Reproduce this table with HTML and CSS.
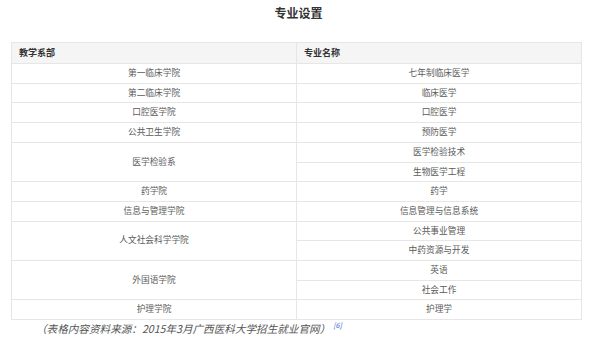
FILE: index.html
```html
<!DOCTYPE html>
<html lang="zh">
<head>
<meta charset="utf-8">
<link rel="stylesheet" href="styles.css">
</head>
<body>
<div class="page">
  <div class="title">专业设置</div>
  <table class="majors">
    <thead>
      <tr><th class="col-l">教学系部</th><th class="col-r">专业名称</th></tr>
    </thead>
    <tbody>
      <tr><td>第一临床学院</td><td>七年制临床医学</td></tr>
      <tr><td>第二临床学院</td><td>临床医学</td></tr>
      <tr><td>口腔医学院</td><td>口腔医学</td></tr>
      <tr><td>公共卫生学院</td><td>预防医学</td></tr>
      <tr><td rowspan="2">医学检验系</td><td>医学检验技术</td></tr>
      <tr><td>生物医学工程</td></tr>
      <tr><td>药学院</td><td>药学</td></tr>
      <tr><td>信息与管理学院</td><td>信息管理与信息系统</td></tr>
      <tr><td rowspan="2">人文社会科学学院</td><td>公共事业管理</td></tr>
      <tr><td>中药资源与开发</td></tr>
      <tr><td rowspan="2">外国语学院</td><td>英语</td></tr>
      <tr><td>社会工作</td></tr>
      <tr><td>护理学院</td><td>护理学</td></tr>
    </tbody>
  </table>
  <div class="caption">（表格内容资料来源：2015年3月广西医科大学招生就业官网）<sup class="ref">[6]</sup></div>
</div>
</body>
</html>
```

FILE: styles.css
```css
html, body {
  margin: 0;
  padding: 0;
  background: #ffffff;
}
body {
  font-family: "Noto Sans CJK SC", "Liberation Sans", sans-serif;
  color: #555555;
}
.page {
  padding: 6px 0 0 11px;
  width: 571px;
}
.title {
  text-align: center;
  font-size: 12px;
  line-height: 14px;
  font-weight: bold;
  color: #333333;
  padding-left: 4px;
}
.majors {
  margin-top: 22px;
  width: 571px;
  border-collapse: collapse;
  font-size: 8.7px;
}
.majors th,
.majors td {
  border: 1px solid #e6e6e6;
  padding: 0;
}
.majors th {
  background: #f5f5f5;
  color: #333333;
  font-weight: bold;
  text-align: left;
  padding-left: 7px;
  line-height: 20px;
  font-size: 9px;
}
.majors .col-l { width: 277px; }
.majors td {
  text-align: center;
  line-height: 18.7px;
  color: #5a5a5a;
}
.caption {
  margin-top: 1px;
  padding-left: 25px;
  font-size: 10.6px;
  line-height: 16px;
  font-style: italic;
  color: #555555;
}
.ref {
  color: #3366cc;
  font-size: 7px;
  font-style: italic;
  margin-left: 3px;
  vertical-align: 5px;
  line-height: 0;
}
```
